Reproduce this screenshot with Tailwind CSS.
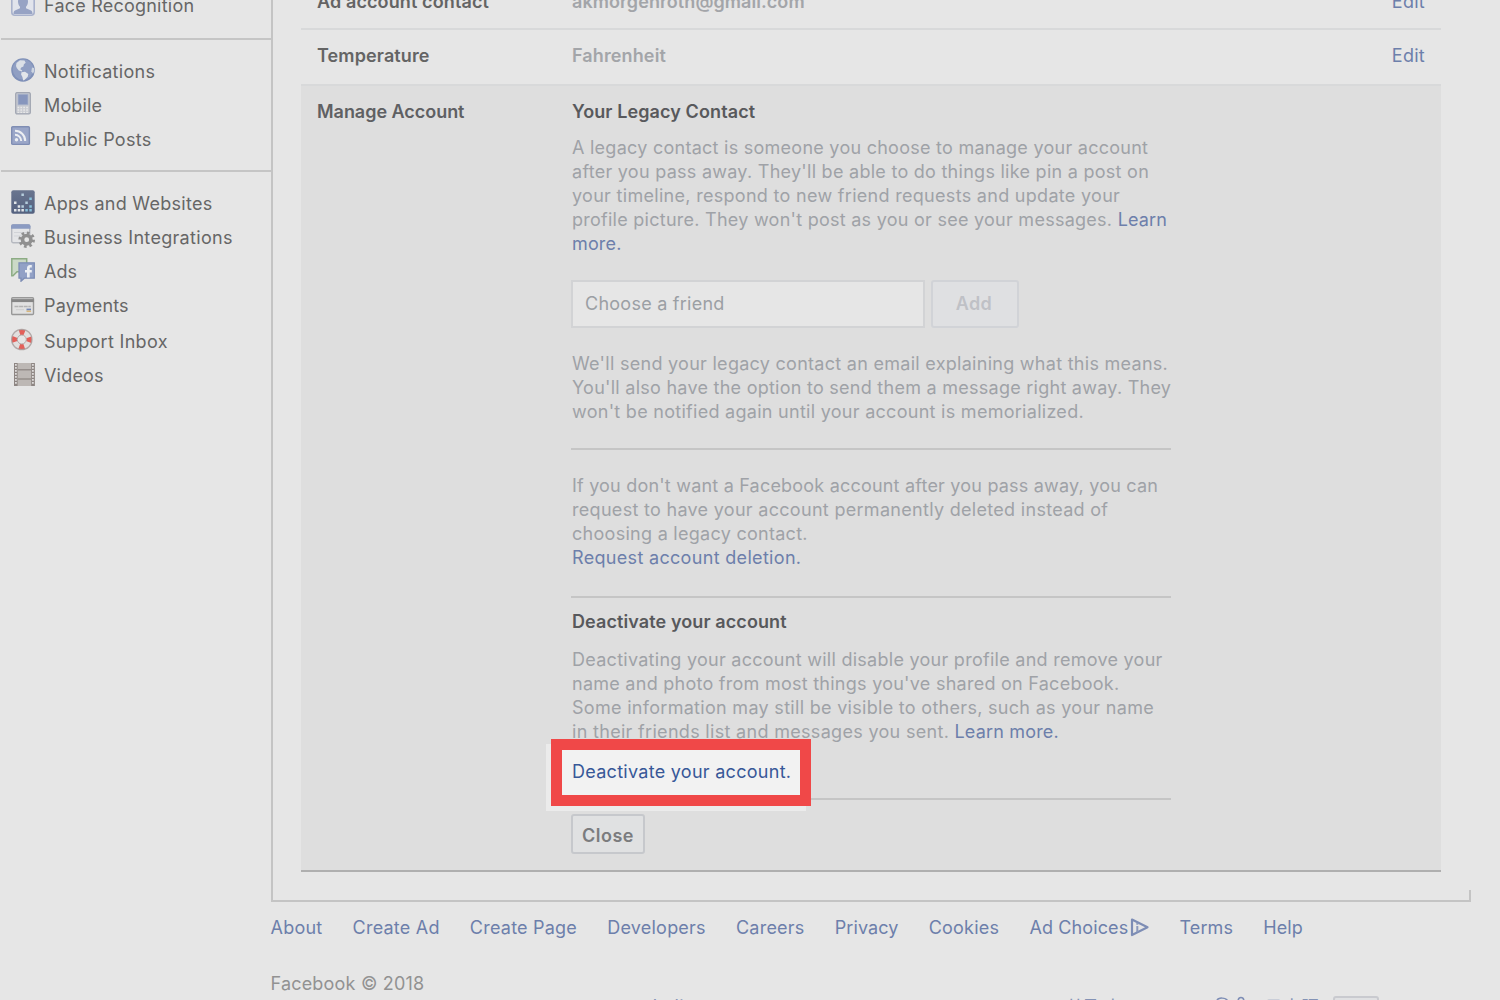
<!DOCTYPE html>
<html lang="en">
<head>
<meta charset="utf-8">
<title>General Account Settings</title>
<script src="https://cdn.jsdelivr.net/npm/@tailwindcss/browser@4"></script>
</head>
<body class="h-[1000px] overflow-hidden bg-[#e6e6e6] font-['Inter','Noto_Sans_CJK_KR','Noto_Sans_CJK_JP',sans-serif] text-[18px] leading-6 tracking-[0.28px] text-[#666666]">
<div class="flex h-[902px]">
  <!-- Settings navigation -->
  <nav class="w-[271px] shrink-0 pl-px">
    <ul class="-mt-2 h-[46px] pl-2.5">
      <li class="flex h-[34px] gap-[9px]">
        <svg class="size-6 shrink-0" viewBox="0 0 24 24"><rect x=".8" y=".8" width="22.4" height="22.4" rx="3" fill="#e1e4ec" stroke="#a9b2cc" stroke-width="1.6"/><path d="M12 4.500c3.500 0 5 2.200 5 5 0 2-.8 4-2 5.200v1.600l4.500 2c1.500.7 2 1.700 2 3.700H2.500c0-2 .5-3 2-3.700l4.500-2v-1.600c-1.200-1.200-2-3.200-2-5.200 0-2.800 1.500-5 5-5z" fill="#97a3c4"/></svg>
        <span class="mt-0.5 tracking-[0.22px]">Face Recognition</span>
      </li>
    </ul>
    <ul class="h-[132px] border-t-2 border-[#c5c5c5] pt-[18px] pl-2.5">
      <li class="flex h-[34px] gap-[9px]">
        <svg class="size-6 shrink-0" viewBox="0 0 24 24"><circle cx="12" cy="12" r="11.800" fill="#7f90b8"/><circle cx="12" cy="11.500" r="10.300" fill="#909fc3"/><path d="M5.500 5L9 2.200l4.500.3 1.200 2.200-1.800 1.500-.5 2.200-2.200 1-.9 1.800 2 1.300-.5 1-3-1-2-2.500-.8-2z" fill="#dbe0e7"/><path d="M10.500 14.200l3.500-.4 3.300 2.200-.6 2.800-3 2.900-1.500.8-.8-3.500-1.300-2.500z" fill="#e3e6ea"/><path d="M21 9.500l2 .5.300 3-1.300 2.800-1.600-2.500z" fill="#cdd5e1"/></svg>
        <span class="mt-0.5 tracking-[0.3px]">Notifications</span>
      </li>
      <li class="flex h-[34px] gap-[9px]">
        <svg class="size-6 shrink-0" viewBox="0 0 24 24"><rect x="4.700" y=".6" width="14.600" height="21.300" rx="1.500" fill="#c9cbd1" stroke="#a1a6b2" stroke-width="1.300"/><rect x="7" y="2.200" width="10" height="10.600" fill="#8796bd" stroke="#a8b2ca" stroke-width=".8"/><path d="M6.500 15.500h11M6.500 18h11M6.500 20.300h11" stroke="#e8e8e8" stroke-width="1.300" stroke-dasharray="1.700 1.200"/></svg>
        <span class="mt-0.5 tracking-[0.15px]">Mobile</span>
      </li>
      <li class="flex h-[34px] gap-[9px]">
        <svg class="size-6 shrink-0" viewBox="0 0 24 24"><rect x=".7" y=".7" width="17.700" height="17.700" rx="1" fill="#9aa6c8" stroke="#7f8db3" stroke-width="1.400"/><circle cx="5.500" cy="13.700" r="1.700" fill="#eceef2"/><path d="M4 8.800a6.200 6.200 0 0 1 6.200 6.200M4 4.800A10.200 10.200 0 0 1 14.200 15" fill="none" stroke="#eceef2" stroke-width="2"/></svg>
        <span class="mt-0.5">Public Posts</span>
      </li>
    </ul>
    <ul class="border-t-2 border-[#c5c5c5] pt-[18px] pl-2.5">
      <li class="flex h-[34px] gap-[9px]">
        <svg class="size-6 shrink-0" viewBox="0 0 24 24"><defs><linearGradient id="apps" x2="0" y2="1"><stop stop-color="#69758f"/><stop offset="1" stop-color="#54617f"/></linearGradient></defs><rect x=".3" y=".3" width="23.400" height="23.400" rx="2" fill="url(#apps)"/><path d="M3 11.500h2.500v2.500H3zM6.700 15.200h2.500v2.500H6.700zM3 18.900h2.500v2.500H3zM6.700 18.900h2.500v2.500H6.700zM10.400 18.900h2.500v2.500h-2.500z" fill="#e1e5e8"/><path d="M10.400 3.500h2.500V6h-2.500zM10.400 15.200h2.500v2.500h-2.500zM14.300 11.500h2.500v2.500h-2.500z" fill="#b5cddc"/><path d="M18.300 7.500h2.500V10h-2.500zM18.300 15.200h2.500v2.500h-2.500zM14.300 18.900h2.500v2.500h-2.500zM18.300 18.900h2.500v2.500h-2.500z" fill="#89c0da"/></svg>
        <span class="mt-0.5">Apps and Websites</span>
      </li>
      <li class="flex h-[34px] gap-[9px]">
        <svg class="size-6 shrink-0" viewBox="0 0 24 24"><rect x=".7" y=".7" width="18" height="18" rx="1.500" fill="#e4e5e7" stroke="#b6b9c0" stroke-width="1.400"/><path d="M0 2.200Q0 .3 2 .3h15.500q2 0 2 1.900V4.700H0z" fill="#8b9bc2"/><path d="M3 8.500h13M3 12h8" stroke="#d1d3d7"/><circle cx="15.700" cy="15.700" r="6.800" fill="none" stroke="#909090" stroke-width="3" stroke-dasharray="2.600 2.741"/><circle cx="15.700" cy="15.700" r="4.200" fill="#e7e7e7" stroke="#909090" stroke-width="3.600"/></svg>
        <span class="mt-0.5 tracking-[0.31px]">Business Integrations</span>
      </li>
      <li class="flex h-[34px] gap-[9px]">
        <svg class="size-6 shrink-0" viewBox="0 0 24 24"><path d="M.8.8h14.900v13H6l-4 4H.8z" fill="#cbd9c7" stroke="#8dac84" stroke-width="1.500"/><path d="M8 4.800h15.300v15.400h-10l-3.300 3v-3H8z" fill="#92a1c6" stroke="#7d8db5" stroke-width="1.300"/><path d="M20.800 7h-1.600c-2.300 0-3.200 1.300-3.200 3.200V12h-2v2.400h2v5h2.700v-5h2.100V12h-2.100v-1.500c0-.7.300-1 1-1h1.100z" fill="#edf0f4"/></svg>
        <span class="mt-0.5 tracking-[0px]">Ads</span>
      </li>
      <li class="flex h-9 gap-[9px]">
        <svg class="size-6 shrink-0" viewBox="0 0 24 24"><rect x=".7" y="5.700" width="21.800" height="16.800" rx="1" fill="#e1e1e1" stroke="#989898" stroke-width="1.400"/><path d="M.5 8.600h22.300" stroke="#858585" stroke-width="3"/><path d="M3.500 14.500h16.300" stroke="#b2b2b2" stroke-width="1.500" stroke-dasharray="4 .6"/><path d="M5 17.700h8" stroke="#cecece"/><path d="M15.500 17.500h4.500" stroke="#7186b5" stroke-width="1.800"/><path d="M15.500 19.300h4.500" stroke="#d9b87c" stroke-width="1.500"/></svg>
        <span class="mt-0.5 tracking-[0.15px]">Payments</span>
      </li>
      <li class="flex h-[34px] gap-[9px]">
        <svg class="size-6 shrink-0" viewBox="0 0 24 24"><circle cx="10.800" cy="11.500" r="7.500" fill="none" stroke="#e2dfde" stroke-width="5"/><circle cx="10.800" cy="11.500" r="7.300" fill="none" stroke="#e3605a" stroke-width="5.500" stroke-dasharray="5 6.467" stroke-dashoffset="2.500"/><circle cx="10.800" cy="11.500" r="10.200" fill="none" stroke="#a59a98" stroke-width="1.200" stroke-opacity=".8"/><circle cx="10.800" cy="11.500" r="4.500" fill="#e6e6e6" stroke="#b1a5a3"/></svg>
        <span class="mt-0.5 tracking-[0.31px]">Support Inbox</span>
      </li>
      <li class="flex h-[34px] gap-[9px]">
        <svg class="size-6 shrink-0" viewBox="0 0 24 24"><path d="M3 1h21v23H3z" fill="#bdb8b5"/><path d="M4.800 1v23M22 1v23" stroke="#8d8582" stroke-width="3.600"/><path d="M4.900 2v21M21.900 2v21" stroke="#e2e0df" stroke-width="1.700" stroke-dasharray="1.700 1.300"/><path d="M7 7.800h13M7 17h13" stroke="#958e8b" stroke-width="1.500"/></svg>
        <span class="mt-0.5 tracking-[0.2px]">Videos</span>
      </li>
    </ul>
  </nav>

  <!-- Settings panel -->
  <main class="relative h-[902px] w-[1200px] shrink-0 border-b-2 border-l-2 border-[#c4c4c4] pl-7">
    <i class="absolute right-0 bottom-0 h-2.5 w-0.5 bg-[#c4c4c4]"></i>
    <div class="w-[1140px]">
      <div class="flex h-7 px-4">
        <b class="-mt-2.5 w-[255px] font-semibold tracking-[0.12px] text-[#646464]">Ad account contact</b>
        <b class="-mt-2.5 flex-1 font-semibold tracking-[0.07px] text-[#a3a5a9]">akmorgenroth@gmail.com</b>
        <a class="-mt-2.5 text-[#6d7fab]">Edit</a>
      </div>
      <div class="flex h-14 border-t-2 border-[#d8d9da] px-4 pt-3.5">
        <b class="w-[255px] font-semibold tracking-[0.12px] text-[#646464]">Temperature</b>
        <b class="flex-1 font-semibold tracking-[0.12px] text-[#a3a5a9]">Fahrenheit</b>
        <a class="text-[#6d7fab]">Edit</a>
      </div>
      <section class="flex h-[788px] border-t-2 border-b-2 border-t-[#d8d9da] border-b-[#afafaf] bg-[#dedede] px-4 pt-3.5">
        <h3 class="w-[254px] font-semibold tracking-[-0.03px] text-[#5f6063]">Manage Account</h3>
        <div class="w-[600px] whitespace-nowrap text-[#9fa2a7]">
          <h4 class="pl-px font-semibold tracking-[0.1px] text-[#58595c]">Your Legacy Contact</h4>
          <p class="mt-3 pl-px"><span class="tracking-[0.26px]">A legacy contact is someone you choose to manage your account</span><br><span class="tracking-[0.27px]">after you pass away. They'll be able to do things like pin a post on</span><br><span class="tracking-[0.3px]">your timeline, respond to new friend requests and update your</span><br><span class="tracking-[0.26px]">profile picture. They won't post as you or see your messages.</span> <a class="text-[#6d7fab] tracking-[0.15px]">Learn<br>more.</a></p>
          <div class="mt-6 flex h-12 gap-1.5">
            <div class="flex w-[354px] items-center border-2 border-[#d2d3d5] bg-[#e6e6e6] pl-3 tracking-[0.25px] text-[#9b9fa4]">Choose a friend</div>
            <button class="w-[88px] rounded-[3px] border-2 border-[#d1d3d7] bg-[#dfe0e2] pr-0.5 font-semibold tracking-[0.4px] text-[#bfc1c6]">Add</button>
          </div>
          <p class="mt-6 pl-px">We'll send your legacy contact an email explaining what this means.<br><span class="tracking-[0.26px]">You'll also have the option to send them a message right away. They</span><br>won't be notified again until your account is memorialized.</p>
          <p class="mt-6 border-t-2 border-[#c5c5c5] pt-6 pl-px"><span class="tracking-[0.2px]">If you don't want a Facebook account after you pass away, you can</span><br><span class="tracking-[0.3px]">request to have your account permanently deleted instead of</span><br>choosing a legacy contact.<br><a class="text-[#6d7fab] tracking-[0.32px]">Request account deletion.</a></p>
          <h4 class="mt-[26px] border-t-2 border-[#c5c5c5] pt-3 pl-px font-semibold tracking-[0.1px] text-[#58595c]">Deactivate your account</h4>
          <p class="mt-3.5 pl-px"><span class="tracking-[0.27px]">Deactivating your account will disable your profile and remove your</span><br><span class="tracking-[0.26px]">name and photo from most things you've shared on Facebook.</span><br><span class="tracking-[0.3px]">Some information may still be visible to others, such as your name</span><br><span class="tracking-[0.31px]">in their friends list and messages you sent.</span> <a class="text-[#6d7fab] tracking-[0.18px]">Learn more.</a></p>
          <div class="relative mt-4 h-10 border-b-2 border-[#c5c5c5] pl-px">
            <!-- Highlight around the deactivate link -->
            <i class="absolute -top-4 -left-[25px] h-[67px] w-[260px] bg-[#ebebeb]"></i>
            <i class="absolute -top-[21px] -left-5 h-[67px] w-[260px] border-[11px] border-[#f04848] bg-[#f2f2f2]"></i>
            <a class="relative text-[#385898]">Deactivate your account.</a>
          </div>
          <button class="mt-3.5 block h-10 w-[74px] rounded-[3px] border-2 border-[#c6c8cc] bg-[#e0e1e2] pt-1 font-semibold tracking-[0.5px] text-[#7b7c7e]">Close</button>
        </div>
      </section>
    </div>
  </main>
</div>

<footer class="pt-3.5 pl-[270.5px] whitespace-nowrap">
  <div class="flex gap-[30.200px] tracking-[0.22px] text-[#6d7fab]">
    <a>About</a><a>Create Ad</a><a>Create Page</a><a>Developers</a><a>Careers</a><a class="tracking-[0.1px]">Privacy</a><a>Cookies</a>
    <a class="flex items-center tracking-[0.12px]">Ad Choices<svg class="-mt-0.5 ml-0.5 h-5 w-[19px]" viewBox="0 0 19 20"><path d="M2 2.500l15.500 7.700L2 18z" fill="none" stroke="#7d8db5" stroke-width="2.200" stroke-linejoin="round"/><path d="M7.300 9v6M7.300 6v1.700" stroke="#8b99bd" stroke-width="2"/></svg></a>
    <a class="tracking-[0.1px]">Terms</a><a class="tracking-[0.1px]">Help</a>
  </div>
  <p class="mt-8 tracking-[0.2px] text-[#929292]">Facebook © 2018</p>
  <!-- Language row, cut off by the window's lower edge -->
  <div class="-mt-0.5 flex h-6 text-[#8493b5]">
    <span class="w-[382px] pt-px pl-[382px]">Italiano</span>
    <span class="w-[562px] shrink-0 pt-0.5 pl-[413px]">한국어</span>
    <svg class="mt-0.5 ml-px h-6 w-8 shrink-0" viewBox="0 0 32 24"><path d="M1 5c0-4 10-4 11 1M22 6c0-6 6-6 6 0" fill="none" stroke="#7d8db5" stroke-width="1.500"/></svg>
    <span class="ml-[17px] w-[68px] shrink-0 pt-0.5">日本語</span>
    <span class="mt-0.5 h-6 w-[46px] shrink-0 rounded-[3px] border-2 border-[#c9cacf] bg-[#e0e1e3]"></span>
  </div>
</footer>
</body>
</html>
